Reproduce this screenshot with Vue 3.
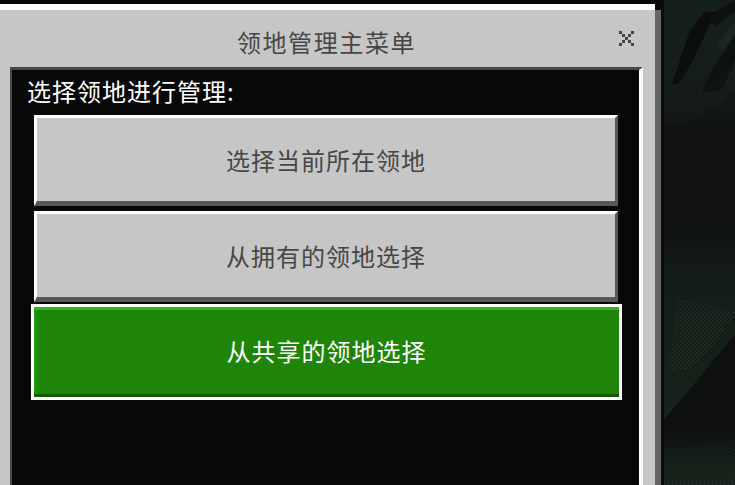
<template>
  <div class="screen">
    <div class="panel">
      <div class="panel-top"></div>
      <div class="panel-body">
        <div class="titlebar">
          <span class="title">领地管理主菜单</span>
          <svg class="close" width="15" height="15" viewBox="0 0 5 5" shape-rendering="crispEdges">
            <path fill="#454545" d="M0 0h1v1H0zM4 0h1v1H4zM1 1h1v1H1zM3 1h1v1H3zM2 2h1v1H2zM1 3h1v1H1zM3 3h1v1H3zM0 4h1v1H0zM4 4h1v1H4z" />
          </svg>
        </div>
        <div class="content">
          <div class="label">选择领地进行管理:</div>
          <div class="menu">
            <button
              v-for="item in items" :key="item.text"
              class="mc-btn"
              :class="{ active: item.active }"
            >
              <span>{{ item.text }}</span>
            </button>
          </div>
        </div>
      </div>
    </div>
    <!-- blurry game world behind the dialog -->
    <svg class="world" width="71" height="485" viewBox="664 0 71 485">
      <defs>
        <pattern id="speck" width="4" height="4" patternUnits="userSpaceOnUse">
          <path fill="#7c8a80" fill-opacity=".3" d="M0 0h1v1H0zM2 2h1v1H2z" />
        </pattern>
        <linearGradient id="fadeTop" x1="0" y1="0" x2="0" y2="1">
          <stop offset="0" stop-color="#16201b" />
          <stop offset=".6" stop-color="#151d18" />
          <stop offset="1" stop-color="#101210" />
        </linearGradient>
        <linearGradient id="fadeMid" x1="0" y1="0" x2="0" y2="1">
          <stop offset="0" stop-color="#101210" />
          <stop offset=".25" stop-color="#141c17" />
          <stop offset="1" stop-color="#16221b" />
        </linearGradient>
        <linearGradient id="fadeLow" x1="0" y1="0" x2="0" y2="1">
          <stop offset="0" stop-color="#0f110f" />
          <stop offset="1" stop-color="#16231c" />
        </linearGradient>
      </defs>
      <rect x="664" y="0" width="71" height="485" fill="#101210" />
      <!-- top leaves -->
      <rect x="664" y="0" width="71" height="135" fill="url(#fadeTop)" />
      <polygon fill="#0c0e0c" points="690,30 704,12 716,12 690,66 678,84 672,84" />
      <polygon fill="#0e110e" points="706,18 735,0 735,12 716,26" />
      <polygon fill="#0e110e" points="712,70 735,36 735,62 722,90 702,92" />
      <polygon fill="#1b2822" points="718,42 735,22 735,34 722,52" />
      <polygon fill="url(#speck)" fill-opacity=".5" points="664,100 700,92 735,60 735,90 700,118 664,125" />
      <!-- middle leaves -->
      <polygon fill="url(#fadeMid)" points="664,225 735,225 735,335 664,420" />
      <polygon fill="url(#speck)" points="678,298 700,303 735,312 715,345 692,368 668,372" />
      <polygon fill="#0e100e" points="735,335 735,425 664,430 664,420" />
      <!-- bottom leaves -->
      <rect x="664" y="425" width="71" height="60" fill="url(#fadeLow)" />
      <polygon fill="url(#speck)" fill-opacity=".5" points="664,450 735,440 735,485 664,485" />
    </svg>
  </div>
</template>

<script setup>
const items = [
  { text: '选择当前所在领地' },
  { text: '从拥有的领地选择' },
  { text: '从共享的领地选择', active: true },
]
</script>

<style>
html, body { margin: 0; background: #0b0f0c; overflow: hidden; }
</style>

<style scoped>
.screen {
  display: flex;
  width: 735px;
  height: 485px;
  overflow: hidden;
  background: #0a0a0a;
  font-family: "Noto Sans CJK SC", "Noto Sans", sans-serif;
}

.panel {
  width: 661px;
  flex: none;
  padding-top: 4px;
  background: #070707;
  box-sizing: border-box;
  display: flex;
  flex-direction: column;
  margin-right: 3px;
}
.panel-top { height: 6px; background: #fff; margin-right: 6px; flex: none; }
.panel-body {
  flex: 1;
  background: #c6c6c6;
  border-right: 6px solid #656565;
  display: flex;
  flex-direction: column;
}

.titlebar {
  height: 57px;
  flex: none;
  position: relative;
  display: flex;
  align-items: center;
  justify-content: center;
  box-sizing: border-box;
}
.title {
  font-size: 24px;
  letter-spacing: 1.6px;
  color: #464646;
  padding-top: 6px;
  padding-right: 2px;
}
.close { position: absolute; left: 619px; top: 21px; }

/* inner black screen */
.content {
  flex: 1;
  margin-left: 10px;
  margin-right: 12px;
  background: #080808;
  border-top: 3px solid #484848;
  border-left: 2px solid #484848;
  border-right: 4px solid #fff;
  box-sizing: border-box;
}
.label {
  font-size: 24px;
  line-height: 30px;
  letter-spacing: 1px;
  color: #fff;
  padding: 6px 0 0 15px;
  height: 38px;
  margin-bottom: 7px;
  box-sizing: border-box;
}

.menu {
  display: flex;
  flex-direction: column;
  gap: 5px;
  padding: 0 21px 0 22px;
}
.mc-btn {
  height: 91px;
  padding: 0;
  display: flex;
  align-items: center;
  justify-content: center;
  background: #c6c6c6;
  border: none;
  border-top: 3px solid #fff;
  border-left: 3px solid #fff;
  border-right: 3px solid #585858;
  border-bottom: 5px solid #585858;
  box-sizing: border-box;
  font-family: inherit;
  font-size: 24px;
  letter-spacing: 1px;
  color: #464646;
}
.mc-btn.active {
  height: 96px;
  margin: -3px -4px 0 -3px;
  padding-bottom: 4px;
  background: #1f8508;
  color: #fff;
  border: 3px solid #fff;
  box-shadow: inset 0 3px 0 #2fb81c, inset 0 -3px 0 #125b05, inset 3px 0 0 #1d9a0a;
}

.world { flex: none; display: block; }
</style>
